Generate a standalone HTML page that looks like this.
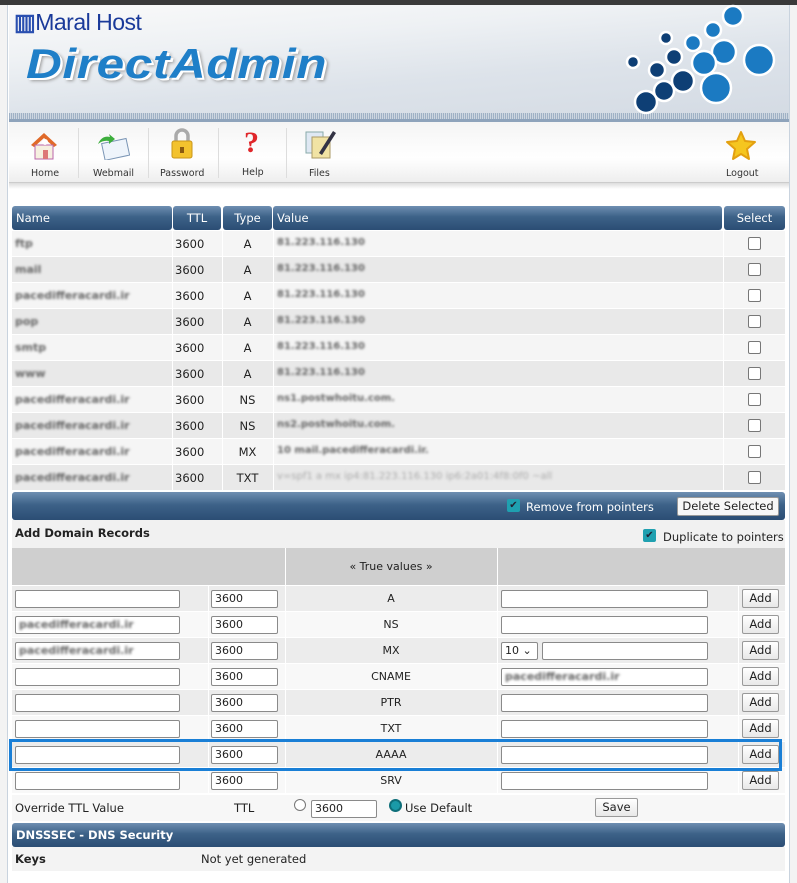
<!DOCTYPE html>
<html><head><meta charset="utf-8"><style>
*{box-sizing:border-box;margin:0;padding:0}
body{width:797px;height:883px;background:#fff;font-family:"DejaVu Sans","Liberation Sans",sans-serif;font-size:11px;color:#222;position:relative;overflow:hidden}
.a{position:absolute}
.bar{background:linear-gradient(#6f8fb2,#3d6288 45%,#2b4d74);color:#fff;border-radius:3px}
.blur{filter:blur(1.3px);color:#666;font-weight:bold}
.inp{position:absolute;height:18px;background:#fff;border:1px solid #8a8a8a;border-radius:2px;font-size:11px;padding:1px 3px;line-height:14px}
.btn{position:absolute;height:19px;background:linear-gradient(#fff,#e8e8e8);border:1px solid #999;border-radius:2px;text-align:center;line-height:17px;font-size:11.5px}
.cb{position:absolute;width:13px;height:13px;border:1px solid #777;border-radius:2px;background:#fff}
.ck{position:absolute;width:13px;height:13px;background:#1fa0b0;border-radius:2px;color:#223;font-size:10px;line-height:13px;text-align:center}
</style></head><body>
<div class="a" style="left:0;top:0;width:797px;height:5px;background:#3a3a3a"></div>
<div class="a" style="left:0;top:5px;width:8px;height:878px;background:#f3f3f3;border-right:1px solid #c9d3de"></div>
<div class="a" style="left:789px;top:5px;width:8px;height:878px;background:#f3f3f3;border-left:1px solid #c9d3de"></div>
<!-- header -->
<div class="a" style="left:9px;top:5px;width:780px;height:117px;background:linear-gradient(175deg,#fafafa 0%,#eef1f4 30%,#dde3ea 60%,#d3dae3 100%)"></div>
<div class="a" style="left:9px;top:113px;width:780px;height:6px;background:repeating-linear-gradient(90deg,#9fb1c5 0 1px,#cdd6e0 1px 2px)"></div>
<div class="a" style="left:9px;top:119px;width:780px;height:3px;background:#8ea3bb"></div>
<div class="a" style="left:14px;top:9px;font-family:'Liberation Sans',sans-serif;font-size:23px;color:#1a3a9a;letter-spacing:-0.5px"><span style="color:#2a4fb0;font-weight:bold">▥</span>Maral Host</div>
<div class="a" style="left:26px;top:40px;font-family:'Liberation Sans',sans-serif;font-size:42px;font-weight:bold;font-style:italic;color:#1f7fc8;text-shadow:2px 2px 0 #fff,3px 3px 3px #999;transform:scaleX(1.18);transform-origin:left;letter-spacing:0.5px">DirectAdmin</div>
<svg class="a" style="left:0;top:0" width="797" height="120">
<g stroke="#fff" stroke-width="2.5">
<circle cx="733" cy="16" r="10" fill="#1b7ac2"/><circle cx="713" cy="30" r="8" fill="#1b7ac2"/><circle cx="693" cy="43" r="8" fill="#1b7ac2"/>
<circle cx="724" cy="52" r="12" fill="#1b7ac2"/><circle cx="759" cy="60" r="15" fill="#1b7ac2"/><circle cx="704" cy="63" r="12" fill="#1b7ac2"/>
<circle cx="716" cy="88" r="15" fill="#1b7ac2"/>
<circle cx="666" cy="38" r="6" fill="#0e3f75"/><circle cx="674" cy="57" r="8" fill="#0e3f75"/><circle cx="633" cy="62" r="6" fill="#0e3f75"/>
<circle cx="657" cy="70" r="8" fill="#0e3f75"/><circle cx="683" cy="81" r="11" fill="#0e3f75"/><circle cx="664" cy="91" r="10" fill="#0e3f75"/>
<circle cx="646" cy="102" r="11" fill="#0e3f75"/></g></svg>
<!-- toolbar -->
<div class="a" style="left:9px;top:122px;width:780px;height:61px;background:linear-gradient(#f4f4f4,#fff 60%,#eee);border-bottom:1px solid #ccc"></div>
<div class="a" style="left:9px;top:183px;width:780px;height:6px;background:linear-gradient(#ddd,#fff)"></div>
<div class="a" style="left:78px;top:128px;width:1px;height:50px;background:#ddd"></div>
<div class="a" style="left:148px;top:128px;width:1px;height:50px;background:#ddd"></div>
<div class="a" style="left:218px;top:128px;width:1px;height:50px;background:#ddd"></div>
<div class="a" style="left:286px;top:128px;width:1px;height:50px;background:#ddd"></div>
<svg class="a" style="left:28px;top:130px" width="32" height="32"><path d="M3 15 L16 3 L29 15 L26 17 L16 8 L6 17Z" fill="#e06a2a"/><rect x="7" y="15" width="18" height="14" fill="#f6f0e0" stroke="#b6a"/><rect x="15" y="20" width="5" height="9" fill="#d77"/><circle cx="17" cy="12" r="3" fill="#fff"/></svg>
<svg class="a" style="left:96px;top:132px" width="34" height="28"><rect x="7" y="9" width="25" height="17" fill="#eef4fb" stroke="#7a95b5" transform="rotate(-12 19 17)"/><path d="M2 12 Q6 3 14 5 L13 2 L19 7 L13 12 L13 9 Q7 8 2 12Z" fill="#3cae3c"/></svg>
<svg class="a" style="left:168px;top:127px" width="28" height="34"><path d="M8 15 V9 A6 6 0 0 1 20 9 V15" stroke="#aaa" stroke-width="3.5" fill="none"/><rect x="4" y="14" width="20" height="17" rx="2" fill="#f3c22e" stroke="#c9961a"/><rect x="12" y="20" width="4" height="6" fill="#8a5a10"/></svg>
<div class="a" style="left:244px;top:126px;font-size:30px;font-weight:bold;color:#e0262a;font-family:'Liberation Serif',serif">?</div>
<svg class="a" style="left:303px;top:127px" width="34" height="34"><rect x="3" y="5" width="17" height="21" fill="#dfe8f3" stroke="#8aa"/><rect x="9" y="10" width="18" height="21" fill="#f1e3a4" stroke="#a96"/><path d="M16 26 L30 4 L33 6 L19 28Z" fill="#334"/></svg>
<svg class="a" style="left:725px;top:130px" width="32" height="32"><path d="M16 2 L20 11 L30 12 L22 19 L24 29 L16 24 L8 29 L10 19 L2 12 L12 11Z" fill="#f5c61f" stroke="#e3a010" stroke-linejoin="round" stroke-width="2"/></svg>
<div class="a" style="top:168px;left:31px;font-size:9.5px;color:#333">Home</div>
<div class="a" style="top:168px;left:93px;font-size:9.5px;color:#333">Webmail</div>
<div class="a" style="top:168px;left:160px;font-size:9.5px;color:#333">Password</div>
<div class="a" style="top:167px;left:242px;font-size:9.5px;color:#333">Help</div>
<div class="a" style="top:168px;left:309px;font-size:9.5px;color:#333">Files</div>
<div class="a" style="top:168px;left:726px;font-size:9.5px;color:#333">Logout</div>
<!-- table header -->
<div class="a bar" style="left:12px;top:206px;width:160px;height:24px;padding:5px 4px;font-size:11.5px">Name</div>
<div class="a bar" style="left:173px;top:206px;width:48px;height:24px;padding:5px 0;text-align:center;font-size:11.5px">TTL</div>
<div class="a bar" style="left:223px;top:206px;width:49px;height:24px;padding:5px 0;text-align:center;font-size:11.5px">Type</div>
<div class="a bar" style="left:273px;top:206px;width:449px;height:24px;padding:5px 4px;font-size:11.5px">Value</div>
<div class="a bar" style="left:724px;top:206px;width:61px;height:24px;padding:5px 0;text-align:center;font-size:11.5px">Select</div>
<div id="rows"></div>
<div class="a bar" style="left:12px;top:492px;width:773px;height:28px"></div>
<div class="ck" style="left:507px;top:499px">✔</div>
<div class="a" style="left:526px;top:500px;color:#fff;font-size:11.5px">Remove from pointers</div>
<div class="btn" style="left:677px;top:497px;width:102px;height:19px;background:#f7f7f7">Delete Selected</div>
<div class="a" style="left:12px;top:520px;width:773px;height:28px;background:#f1f1f1"></div>
<div class="a" style="left:15px;top:526px;font-weight:bold;font-size:11.5px">Add Domain Records</div>
<div class="ck" style="left:643px;top:529px">✔</div>
<div class="a" style="left:663px;top:530px;font-size:11.5px">Duplicate to pointers</div>
<div class="a" style="left:12px;top:548px;width:773px;height:37px;background:#cfcfcf"></div>
<div class="a" style="left:285px;top:548px;width:1px;height:37px;background:#fff"></div>
<div class="a" style="left:497px;top:548px;width:1px;height:37px;background:#fff"></div>
<div class="a" style="left:285px;top:560px;width:212px;text-align:center;font-size:11px">« True values »</div>
<div id="add"></div>
<div class="a" style="left:12px;top:795px;width:773px;height:26px;background:#f7f7f7"></div>
<div class="a" style="left:15px;top:801px;font-size:11.5px">Override TTL Value</div>
<div class="a" style="left:234px;top:801px;font-size:11.5px">TTL</div>
<div class="a" style="left:294px;top:799px;width:12px;height:12px;border:1px solid #777;border-radius:50%;background:#fff"></div>
<div class="inp" style="left:311px;top:800px;width:66px">3600</div>
<div class="a" style="left:389px;top:799px;width:13px;height:13px;border-radius:50%;background:#1a9aa8;border:2px solid #0e6f7a"></div>
<div class="a" style="left:405px;top:801px;font-size:11.5px">Use Default</div>
<div class="btn" style="left:595px;top:798px;width:43px">Save</div>
<div class="a bar" style="left:12px;top:823px;width:773px;height:24px;padding:5px 4px;font-weight:bold;font-size:11.5px">DNSSSEC - DNS Security</div>
<div class="a" style="left:12px;top:847px;width:773px;height:24px;background:#f3f3f3"></div>
<div class="a" style="left:15px;top:852px;font-weight:bold;font-size:11.5px">Keys</div>
<div class="a" style="left:201px;top:852px;font-size:11.5px">Not yet generated</div>
<div class="a" style="left:9px;top:739px;width:773px;height:32px;border:3px solid #1a7fd6"></div>
<script>
var r=[["ftp","A","81.223.116.130"],["mail","A","81.223.116.130"],["pacedifferacardi.ir","A","81.223.116.130"],["pop","A","81.223.116.130"],["smtp","A","81.223.116.130"],["www","A","81.223.116.130"],["pacedifferacardi.ir","NS","ns1.postwhoitu.com."],["pacedifferacardi.ir","NS","ns2.postwhoitu.com."],["pacedifferacardi.ir","MX","10 mail.pacedifferacardi.ir."],["pacedifferacardi.ir","TXT","v=spf1 a mx ip4:81.223.116.130 ip6:2a01:4f8:0f0 ~all"]];
var h="";r.forEach(function(x,i){var y=231+i*26,bg=i%2?"#e9e9e9":"#f5f5f5";
h+='<div class="a" style="left:12px;top:'+y+'px;width:773px;height:25px;background:'+bg+'"></div>';
[172,222,273,723].forEach(function(c){h+='<div class="a" style="left:'+c+'px;top:'+y+'px;width:1px;height:25px;background:#fff"></div>'});
h+='<div class="a blur" style="left:15px;top:'+(y+6)+'px">'+x[0]+'</div><div class="a" style="left:175px;top:'+(y+6)+'px;font-size:11.5px">3600</div><div class="a" style="left:222px;width:51px;text-align:center;top:'+(y+6)+'px;font-size:11.5px">'+x[1]+'</div><div class="a blur" style="left:277px;top:'+(y+6)+'px;font-size:10px'+(i==9?';color:#aaa;font-weight:normal':'')+'">'+x[2]+'</div><div class="cb" style="left:748px;top:'+(y+6)+'px"></div>';});
document.getElementById("rows").innerHTML=h;
var t=["A","NS","MX","CNAME","PTR","TXT","AAAA","SRV"];h="";
t.forEach(function(x,i){var y=586+i*26,bg=i%2?"#f8f8f8":"#ececec";
h+='<div class="a" style="left:12px;top:'+y+'px;width:773px;height:25px;background:'+bg+'"></div>';
[208,285,497,738].forEach(function(c){h+='<div class="a" style="left:'+c+'px;top:'+y+'px;width:1px;height:25px;background:#fff"></div>'});
var nm=(x=="NS"||x=="MX")?'<span class="blur">pacedifferacardi.ir</span>':'';
h+='<div class="inp" style="left:15px;top:'+(y+4)+'px;width:165px">'+nm+'</div><div class="inp" style="left:211px;top:'+(y+4)+'px;width:67px">3600</div><div class="a" style="left:285px;width:212px;text-align:center;top:'+(y+6)+'px">'+x+'</div>';
if(x=="MX")h+='<div class="inp" style="left:501px;top:'+(y+4)+'px;width:37px">10 ⌄</div><div class="inp" style="left:542px;top:'+(y+4)+'px;width:166px"></div>';
else h+='<div class="inp" style="left:501px;top:'+(y+4)+'px;width:207px">'+(x=="CNAME"?'<span class="blur">pacedifferacardi.ir</span>':'')+'</div>';
h+='<div class="btn" style="left:742px;top:'+(y+3)+'px;width:37px">Add</div>';});
document.getElementById("add").innerHTML=h;
</script>
</body></html>
